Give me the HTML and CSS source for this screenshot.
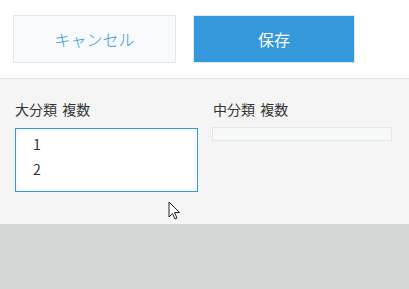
FILE: index.html
```html
<!DOCTYPE html>
<html lang="ja">
<head>
  <meta charset="UTF-8">
  <meta name="viewport" content="width=device-width, initial-scale=1.0">
  <title>分類設定</title>
  <link rel="stylesheet" href="styles.css">
</head>
<body>
  <div class="header">
    <button class="btn btn-cancel" type="button">キャンセル</button>
    <button class="btn btn-save" type="button">保存</button>
  </div>
  <div class="content">
    <div class="field field-left">
      <div class="field-label">大分類 複数</div>
      <div class="listbox focused">
        <div class="option">1</div>
        <div class="option">2</div>
      </div>
    </div>
    <div class="field field-right">
      <div class="field-label">中分類 複数</div>
      <div class="listbox empty"></div>
    </div>
    <svg class="cursor" xmlns="http://www.w3.org/2000/svg" width="13" height="20" viewBox="0 0 13 20">
      <path d="M1 1v15l3.5-3.5 2.5 5.5 2-1-2.5-5.5h5z" fill="white" stroke="#222" stroke-width="1" stroke-linejoin="round"/>
    </svg>
  </div>
  <div class="footer"></div>
</body>
</html>
```

FILE: styles.css
```css
body {
  margin: 0;
  font-family: "Noto Sans CJK JP", "Noto Sans", sans-serif;
  background: #d4d6d5;
  color: #333;
}

.header {
  background: #fff;
  height: 79px;
  border-bottom: 1px solid #e3e3e3;
  display: flex;
  align-items: flex-start;
  padding: 15px 0 0 13px;
  box-sizing: border-box;
  gap: 17px;
}

.btn {
  width: 163px;
  height: 48px;
  font-family: inherit;
  font-weight: 300;
  font-size: 16px;
  border: 1px solid #e3e7e8;
  padding: 0;
  cursor: pointer;
}

.btn-cancel {
  background: #f7f9fa;
  color: #3498db;
}

.btn-save {
  width: 162px;
  background: #3498db;
  color: #fff;
  font-weight: 400;
}

.content {
  position: relative;
  background: #f5f5f5;
  height: 145px;
  display: flex;
  padding: 0 0 0 15px;
  gap: 14px;
}

.field {
  padding-top: 20px;
}

.field-left {
  width: 183px;
}

.field-right {
  width: 180px;
}

.field-label {
  font-size: 14px;
  line-height: 20px;
  height: 28px;
  word-spacing: 2px;
}

.field-right .field-label {
  margin-left: 1px;
}

.listbox {
  box-sizing: border-box;
  background: #fff;
  border: 1px solid #e3e7e8;
}

.listbox.focused {
  height: 64px;
  margin-top: 1px;
  border-color: #3498db;
  box-shadow: inset 0 0 6px rgba(0, 0, 0, 0.07);
  padding: 3px 0 0 17px;
}

.listbox.empty {
  height: 14px;
  background: #f7f8f8;
}

.option {
  font-size: 14px;
  line-height: 25px;
  color: #333;
}

.cursor {
  position: absolute;
  left: 168px;
  top: 122px;
}

.footer {
  height: 64px;
}
```
